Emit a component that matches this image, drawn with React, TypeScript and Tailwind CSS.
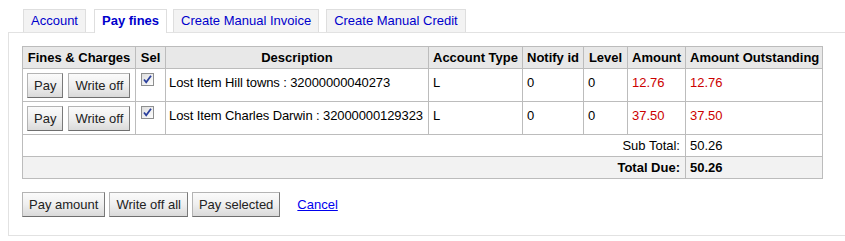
import React from "react";

const btn =
  "h-[25px] px-[6px] text-[13px] text-[#222] border border-[#b4b4b4] border-b-[#6f6f6f] border-r-[#7a7a7a] bg-gradient-to-b from-[#fbfbfb] via-[#efefef] to-[#dadada] leading-none";

function Check() {
  return (
    <svg width="13" height="13" viewBox="0 0 13 13" className="block">
      <defs>
        <linearGradient id="cb" x1="0" y1="0" x2="1" y2="1">
          <stop offset="0" stopColor="#dcdcdc" />
          <stop offset="1" stopColor="#ffffff" />
        </linearGradient>
      </defs>
      <rect x="0.5" y="0.5" width="12" height="12" fill="url(#cb)" stroke="#8e8f8f" />
      <path d="M3 6.5 L5.2 9.2 L10 2.8" fill="none" stroke="#2a3f9c" strokeWidth="1.8" />
    </svg>
  );
}

const rows = [
  { desc: "Lost Item Hill towns : 32000000040273", amt: "12.76" },
  { desc: "Lost Item Charles Darwin : 32000000129323", amt: "37.50" },
];

const td = "border border-[#bcbcbc] px-[4px] pt-[4px] pb-[3px] align-top";
const th = "border border-[#bcbcbc] px-[4px] py-[3px] font-bold bg-[#e8e8e8] text-center whitespace-nowrap";

export default function App() {
  return (
    <div
      className="w-[845px] h-[241px] bg-white overflow-hidden text-[13px] text-black"
      style={{ fontFamily: '"Liberation Sans", Arial, sans-serif' }}
    >
      <div className="pt-[9px] pl-[8px]">
        <div className="flex items-start pl-[15px] h-[24px] relative z-10">
          <div className="h-[23px] px-[7px] bg-[#f3f3f3] border border-b-0 border-[#dedede] text-[#0000cc] leading-[22px]">Account</div>
          <div className="ml-[8px] h-[24px] px-[7px] bg-white border border-b-0 border-[#dedede] text-[#0000cc] font-bold leading-[22px]">Pay fines</div>
          <div className="ml-[6px] h-[23px] px-[7px] bg-[#f3f3f3] border border-b-0 border-[#dedede] text-[#0000cc] leading-[22px]">Create Manual Invoice</div>
          <div className="ml-[7px] h-[23px] px-[7px] bg-[#f3f3f3] border border-b-0 border-[#dedede] text-[#0000cc] leading-[22px]">Create Manual Credit</div>
        </div>
        <div className="-mt-px w-[900px] h-[204px] border border-[#e2e2e2] pt-[13px] pl-[13px]">
          <table className="border-collapse table-fixed w-[800px] leading-[15px]">
            <colgroup>
              <col style={{ width: 113 }} />
              <col style={{ width: 30 }} />
              <col style={{ width: 263 }} />
              <col style={{ width: 94 }} />
              <col style={{ width: 61 }} />
              <col style={{ width: 44 }} />
              <col style={{ width: 58 }} />
              <col style={{ width: 137 }} />
            </colgroup>
            <thead>
              <tr className="h-[22px]">
                <th className={th}>Fines &amp; Charges</th>
                <th className={th}>Sel</th>
                <th className={th}>Description</th>
                <th className={th}>Account Type</th>
                <th className={th}>Notify id</th>
                <th className={th}>Level</th>
                <th className={th}>Amount</th>
                <th className={th}>Amount Outstanding</th>
              </tr>
            </thead>
            <tbody>
              {rows.map((r) => (
                <tr key={r.desc}>
                  <td className={td}>
                    <div className="flex gap-[5px]">
                      <button className={btn}>Pay</button>
                      <button className={btn}>Write off</button>
                    </div>
                  </td>
                  <td className={td}>
                    <div className="pl-[1px]">
                      <Check />
                    </div>
                  </td>
                  <td className={td + " whitespace-nowrap pt-[6px] pl-[3px] tracking-[-0.1px]"}>{r.desc}</td>
                  <td className={td + " pt-[6px]"}>L</td>
                  <td className={td + " pt-[6px]"}>0</td>
                  <td className={td + " pt-[6px]"}>0</td>
                  <td className={td + " pt-[6px] text-[#cc0000]"}>{r.amt}</td>
                  <td className={td + " pt-[6px] text-[#cc0000]"}>{r.amt}</td>
                </tr>
              ))}
              <tr>
                <td colSpan={7} className="border border-[#bcbcbc] px-[5px] py-[3px] text-right">Sub Total:</td>
                <td className="border border-[#bcbcbc] px-[4px] py-[3px]">50.26</td>
              </tr>
              <tr className="bg-[#f2f2f2] font-bold">
                <td colSpan={7} className="border border-[#bcbcbc] px-[5px] py-[3px] text-right">Total Due:</td>
                <td className="border border-[#bcbcbc] px-[4px] py-[3px]">50.26</td>
              </tr>
            </tbody>
          </table>
          <div className="mt-[13px] flex items-center gap-[4px]">
            <button className={btn}>Pay amount</button>
            <button className={btn}>Write off all</button>
            <button className={btn}>Pay selected</button>
            <a href="#" className="ml-[13px] text-[#0000ee] underline">Cancel</a>
          </div>
        </div>
      </div>
    </div>
  );
}
